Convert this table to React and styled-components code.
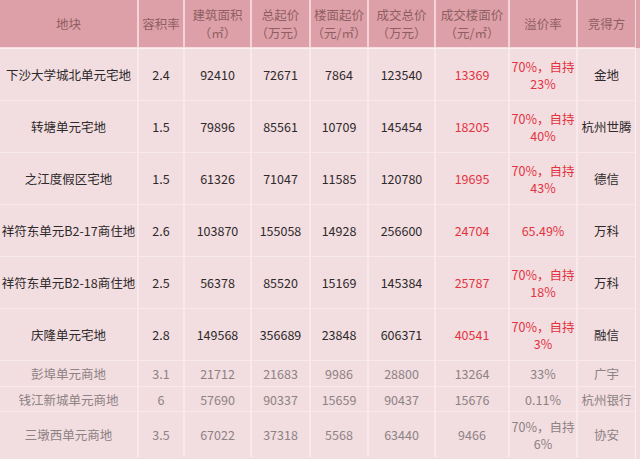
import React from "react";
import styled, { createGlobalStyle } from "styled-components";

const Global = createGlobalStyle`
  html, body { margin: 0; padding: 0; background: #f2dde0; }
  body { font-family: "Noto Sans CJK SC", "Noto Sans", sans-serif; }
`;

const Wrap = styled.div`
  width: 640px;
  height: 459px;
  overflow: hidden;
  background: #f2dde0;
  display: flex;
  align-items: flex-start;
`;

const Table = styled.table`
  width: 635px;
  border-collapse: collapse;
  table-layout: fixed;
  font-size: 12.5px;
`;

const Edge = styled.div`
  width: 5px;
  height: 459px;
  background: linear-gradient(#dfa1a9 0 48px, #f1dcdf 48px);
  border-left: 1px solid rgba(255, 255, 255, 0.55);
`;

const Th = styled.th`
  background: #dea0a8;
  color: #8e5e62;
  font-weight: normal;
  height: 47px;
  padding: 0;
  line-height: 18px;
  text-align: center;
  border-left: 2px solid rgba(255, 240, 242, 0.65);
  border-bottom: 2px solid rgba(255, 245, 246, 0.7);
  &:first-child { border-left: none; }
`;

const Td = styled.td`
  height: ${(p) => p.$h - 1}px;
  padding: 0;
  text-align: center;
  line-height: 17px;
  color: ${(p) => (p.$red ? "#e2343f" : p.$muted ? "#8d8284" : "#2e2a2b")};
  border-left: 2px solid rgba(255, 250, 250, 0.45);
  border-top: 1px solid rgba(255, 250, 250, 0.45);
  white-space: nowrap;
  &:first-child { border-left: none; }
`;

const widths = [138, 46, 67, 59, 58, 67, 74, 68, 58];

const headers = [
  ["地块"],
  ["容积率"],
  ["建筑面积", "（㎡）"],
  ["总起价", "（万元）"],
  ["楼面起价", "（元/㎡）"],
  ["成交总价", "（万元）"],
  ["成交楼面价", "（元/㎡）"],
  ["溢价率"],
  ["竞得方"],
];

const rows = [
  { h: 52, d: ["下沙大学城北单元宅地", "2.4", "92410", "72671", "7864", "123540", "13369", ["70%，自持", "23%"], "金地"] },
  { h: 52, d: ["转塘单元宅地", "1.5", "79896", "85561", "10709", "145454", "18205", ["70%，自持", "40%"], "杭州世腾"] },
  { h: 52, d: ["之江度假区宅地", "1.5", "61326", "71047", "11585", "120780", "19695", ["70%，自持", "43%"], "德信"] },
  { h: 52, d: ["祥符东单元B2-17商住地", "2.6", "103870", "155058", "14928", "256600", "24704", ["65.49%"], "万科"] },
  { h: 52, d: ["祥符东单元B2-18商住地", "2.5", "56378", "85520", "15169", "145384", "25787", ["70%，自持", "18%"], "万科"] },
  { h: 52, d: ["庆隆单元宅地", "2.8", "149568", "356689", "23848", "606371", "40541", ["70%，自持", "3%"], "融信"] },
  { h: 26, muted: true, d: ["彭埠单元商地", "3.1", "21712", "21683", "9986", "28800", "13264", ["33%"], "广宇"] },
  { h: 25, muted: true, d: ["钱江新城单元商地", "6", "57690", "90337", "15659", "90437", "15676", ["0.11%"], "杭州银行"] },
  { h: 46, muted: true, d: ["三墩西单元商地", "3.5", "67022", "37318", "5568", "63440", "9466", ["70%，自持", "6%"], "协安"] },
];

export default function App() {
  return (
    <Wrap>
      <Global />
      <Table>
        <colgroup>
          {widths.map((w, i) => (
            <col key={i} style={{ width: w }} />
          ))}
        </colgroup>
        <thead>
          <tr>
            {headers.map((h, i) => (
              <Th key={i}>
                {h.map((l, j) => (
                  <div key={j}>{l}</div>
                ))}
              </Th>
            ))}
          </tr>
        </thead>
        <tbody>
          {rows.map((r, i) => (
            <tr key={i}>
              {r.d.map((c, j) => (
                <Td
                  key={j}
                  $h={r.h}
                  $muted={r.muted}
                  $red={!r.muted && (j === 6 || j === 7)}
                >
                  {Array.isArray(c) ? c.map((l, k) => <div key={k}>{l}</div>) : c}
                </Td>
              ))}
            </tr>
          ))}
        </tbody>
      </Table>
      <Edge />
    </Wrap>
  );
}
